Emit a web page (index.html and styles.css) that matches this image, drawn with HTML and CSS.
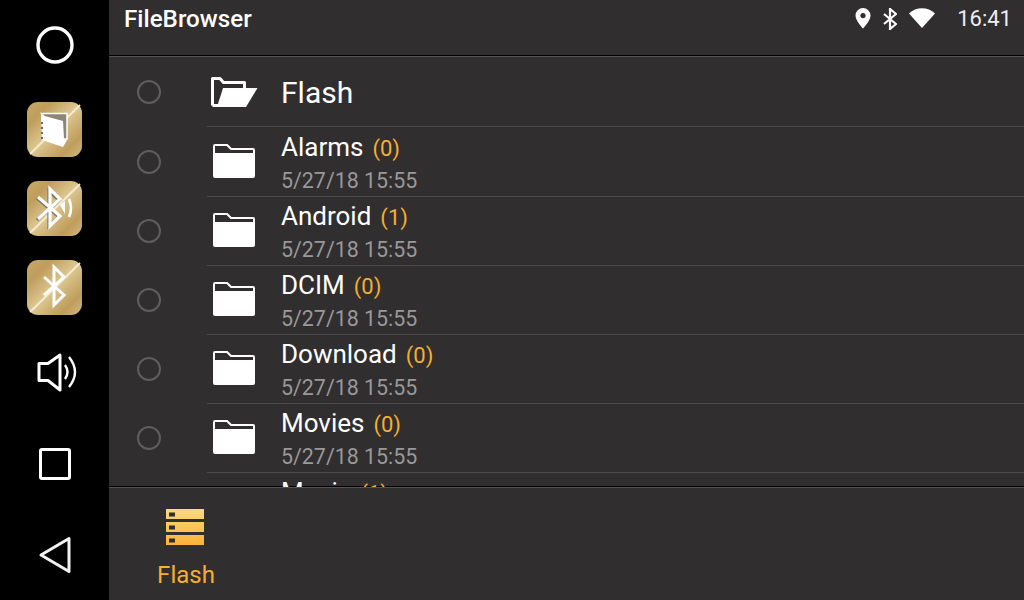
FILE: index.html
```html
<!DOCTYPE html>
<html lang="en">
<head>
<meta charset="utf-8">
<title>FileBrowser</title>
<link rel="stylesheet" href="styles.css">
</head>
<body>
<svg class="defs" width="0" height="0" aria-hidden="true">
  <defs>
    <linearGradient id="gold" x1="0" y1="0" x2="1" y2="1">
      <stop offset="0" stop-color="#c8a869"/>
      <stop offset="0.22" stop-color="#bf9d5c"/>
      <stop offset="0.4" stop-color="#d2b87f"/>
      <stop offset="0.5" stop-color="#dec992"/>
      <stop offset="0.6" stop-color="#d2b87f"/>
      <stop offset="0.8" stop-color="#bf9d5c"/>
      <stop offset="1" stop-color="#d4b97f"/>
    </linearGradient>
    <linearGradient id="bars" x1="0" y1="0" x2="0" y2="1">
      <stop offset="0" stop-color="#fbd97e"/>
      <stop offset="1" stop-color="#fbb239"/>
    </linearGradient>
    <symbol id="folder" viewBox="0 0 42 34">
      <path fill="#fff" d="M2 0h12.500l4 4H40a2 2 0 0 1 2 2v26a2 2 0 0 1-2 2H2a2 2 0 0 1-2-2V2a2 2 0 0 1 2-2z"/>
      <path fill="#302e2f" d="M2 2h11.600l4 4H40v3H2z"/>
    </symbol>
  </defs>
</svg>
<div class="app">
  <nav class="rail">
    <div class="rail-top">
      <svg class="rail-icon" width="40" height="40" viewBox="0 0 40 40"><circle cx="20" cy="20" r="17" fill="none" stroke="#fff" stroke-width="3.400"/></svg>
    </div>
    <div class="rail-gold">
      <svg class="rail-icon" width="55" height="55" viewBox="0 0 55 55">
        <rect width="55" height="55" rx="11" fill="url(#gold)"/>
        <path d="M3 52 L53 3" stroke="#f5ecd5" stroke-width="1.800"/>
        <path fill="#8d8578" stroke="#fff" stroke-width="1.500" d="M14.500 11.500 H40 V37 H36z"/>
        <path fill="#fff" d="M14 13 L36 19 L37 37 L40 38 L36 45 L15 38z"/>
        <path stroke="#6a6661" stroke-width="2" stroke-dasharray="2 3" d="M15 20 V38"/>
      </svg>
      <svg class="rail-icon" width="55" height="55" viewBox="0 0 55 55">
        <rect width="55" height="55" rx="11" fill="url(#gold)"/>
        <path d="M3 52 L53 3" stroke="#f5ecd5" stroke-width="1.800"/>
        <path fill="none" stroke="#77736b" stroke-width="3.200" transform="translate(-1 1)" d="M11 16 L33 35 L23 44 V9 L33 18 L11 38"/>
        <path fill="none" stroke="#fff" stroke-width="3.200" d="M11 16 L33 35 L23 45 V8 L33 18 L11 38"/>
        <path fill="none" stroke="#fff" stroke-width="2.600" d="M42 18 Q46 27 42 36"/>
        <path fill="#fff" d="M33 24 L38 20 V33z"/>
      </svg>
      <svg class="rail-icon" width="55" height="55" viewBox="0 0 55 55">
        <rect width="55" height="55" rx="11" fill="url(#gold)"/>
        <path d="M3 52 L53 3" stroke="#f5ecd5" stroke-width="1.800"/>
        <path fill="none" stroke="#fff" stroke-width="3" d="M17 17 L37 35 L27 45 V7 L37 17 L17 35"/>
      </svg>
    </div>
    <div class="rail-keys">
      <svg class="rail-icon speaker" width="44" height="40" viewBox="0 0 44 40"><path fill="none" stroke="#fff" stroke-width="3" stroke-linejoin="round" d="M2 10.500H11L23 2V37L11 27.500H2z"/><path fill="none" stroke="#fff" stroke-width="2.400" d="M28 12Q33 19 28 26M32 4Q44 19 32 34"/></svg>
      <svg class="rail-icon square" width="34" height="34" viewBox="0 0 34 34"><rect x="2.500" y="2.500" width="29" height="29" rx="1.500" fill="none" stroke="#fff" stroke-width="3"/></svg>
      <svg class="rail-icon back" width="34" height="38" viewBox="0 0 34 38"><path fill="none" stroke="#f2f2f2" stroke-width="3" stroke-linejoin="round" d="M3 19L31 2.500V35.500z"/></svg>
    </div>
  </nav>
  <main class="main">
    <header class="topbar">
      <h1 class="title">FileBrowser</h1>
      <div class="status">
        <svg width="16" height="22" viewBox="0 0 16 22"><path fill="#fff" fill-rule="evenodd" d="M8 1a7.500 7.500 0 0 1 7.500 7.500C15.500 14 8 21.500 8 21.500S.5 14 .5 8.500A7.500 7.500 0 0 1 8 1zm0 5a2.600 2.600 0 1 0 0 5.200A2.600 2.600 0 0 0 8 6z"/></svg>
        <svg class="status-bt" width="14" height="22" viewBox="0 0 14 22"><path fill="none" stroke="#fff" stroke-width="2.200" d="M1 6L13 16L7 21V1L13 6L1 16"/></svg>
        <svg class="status-wifi" width="26" height="20" viewBox="0 0 26 20"><path fill="#fff" d="M0 5.500C7-1.500 19-1.500 26 5.500L13 20z"/></svg>
        <span class="clock">16:41</span>
      </div>
    </header>
    <section class="list">
      <div class="root-row">
        <span class="radio"></span>
        <svg class="root-icon" width="48" height="32" viewBox="0 0 48 32"><path fill="none" stroke="#fff" stroke-width="3" stroke-linejoin="round" d="M2.500 29.500V2.500H10L13.500 6.500H34.500V12M2.500 29.500H10"/><path fill="#fff" d="M13 12H47.500L36 31H7z"/></svg>
        <span class="root-name">Flash</span>
      </div>
      <div class="row">
        <span class="radio"></span>
        <svg class="folder" width="42" height="34"><use href="#folder"/></svg>
        <div class="info"><div class="name">Alarms<span class="count">(0)</span></div><div class="date">5/27/18 15:55</div></div>
      </div>
      <div class="row">
        <span class="radio"></span>
        <svg class="folder" width="42" height="34"><use href="#folder"/></svg>
        <div class="info"><div class="name">Android<span class="count">(1)</span></div><div class="date">5/27/18 15:55</div></div>
      </div>
      <div class="row">
        <span class="radio"></span>
        <svg class="folder" width="42" height="34"><use href="#folder"/></svg>
        <div class="info"><div class="name">DCIM<span class="count">(0)</span></div><div class="date">5/27/18 15:55</div></div>
      </div>
      <div class="row">
        <span class="radio"></span>
        <svg class="folder" width="42" height="34"><use href="#folder"/></svg>
        <div class="info"><div class="name">Download<span class="count">(0)</span></div><div class="date">5/27/18 15:55</div></div>
      </div>
      <div class="row">
        <span class="radio"></span>
        <svg class="folder" width="42" height="34"><use href="#folder"/></svg>
        <div class="info"><div class="name">Movies<span class="count">(0)</span></div><div class="date">5/27/18 15:55</div></div>
      </div>
      <div class="row">
        <span class="radio"></span>
        <svg class="folder" width="42" height="34"><use href="#folder"/></svg>
        <div class="info"><div class="name">Music<span class="count">(1)</span></div><div class="date">5/27/18 15:55</div></div>
      </div>
    </section>
    <footer class="bottom">
      <div class="tab">
        <svg width="38" height="36" viewBox="0 0 38 36">
          <path fill="url(#bars)" d="M0 0H38V10H0zM0 13H38V23H0zM0 26H38V36H0z"/>
          <path fill="#302e2f" d="M3 3.500H9V7.500H3zM3 16.500H9V20.500H3zM3 29.500H9V33.500H3z"/>
        </svg>
        <span class="tab-label">Flash</span>
      </div>
    </footer>
  </main>
</div>
</body>
</html>
```

FILE: styles.css
```css
* { box-sizing: border-box; }
html, body { margin: 0; height: 100%; overflow: hidden; }
body { background: #000; font-family: Roboto, "Noto Sans", sans-serif; color: #fff; }
.defs { position: absolute; }
.app { display: flex; width: 1024px; height: 600px; }

.rail { width: 109px; flex: none; background: #000; display: flex; flex-direction: column; align-items: center; }
.rail-icon { display: block; }
.rail-top { height: 102px; padding-top: 25px; }
.rail-gold { display: flex; flex-direction: column; gap: 24px; }
.rail-keys { display: flex; flex-direction: column; align-items: center; margin-top: 38px; }
.speaker { margin-left: 9px; }
.square { margin-top: 54px; }
.back { margin-top: 55px; }

.main { flex: 1; min-width: 0; background: #302e2f; display: flex; flex-direction: column; }

.topbar { height: 57px; flex: none; display: flex; justify-content: space-between; padding: 5px 12px 0 15px; border-bottom: 1px solid #555354; box-shadow: inset 0 -1px 0 #000; }
.title { margin: 0; font-size: 24.200px; line-height: 28px; font-weight: 500; }
.status { display: flex; align-items: flex-start; padding-top: 2px; }
.status-bt { margin-left: 12px; margin-top: 1px; }
.status-wifi { margin-left: 12px; margin-top: 1px; }
.clock { margin-left: 22px; font-size: 22px; line-height: 24px; color: #eee; }

.list { flex: 1; min-height: 0; overflow: hidden; }
.root-row, .row { display: flex; align-items: center; position: relative; padding-left: 28px; }
.root-row { height: 70px; }
.row { height: 69px; }
.root-row + .row { margin-top: 1px; }
.root-row::after, .row::after { content: ""; position: absolute; left: 98px; right: 0; bottom: 0; height: 1px; background: #4b494a; }
.radio { width: 24px; height: 24px; flex: none; border: 2px solid #5f5d5e; border-radius: 50%; }
.row .radio { margin-top: -1px; }
.root-icon { flex: none; margin-left: 49px; }
.root-name { margin-left: 23px; font-size: 30px; line-height: 34px; margin-top: 2px; }
.folder { flex: none; margin-left: 52px; margin-top: -3px; }
.info { margin-left: 26px; margin-top: 1px; }
.name { font-size: 26px; line-height: 30px; }
.count { margin-left: 9px; font-size: 22px; color: #f5ae2e; }
.date { font-size: 21.400px; line-height: 27px; color: #9a9899; margin-top: 3px; margin-bottom: 1px; }

.bottom { height: 113px; flex: none; border-top: 1px solid #555354; box-shadow: 0 -1px 0 #000; padding-left: 48px; padding-top: 21px; }
.tab { display: flex; flex-direction: column; align-items: center; width: 58px; }
.tab svg { display: block; margin-right: 2px; }
.tab-label { font-size: 24px; line-height: 28px; margin-top: 16px; color: #f5ae2e; }
```
